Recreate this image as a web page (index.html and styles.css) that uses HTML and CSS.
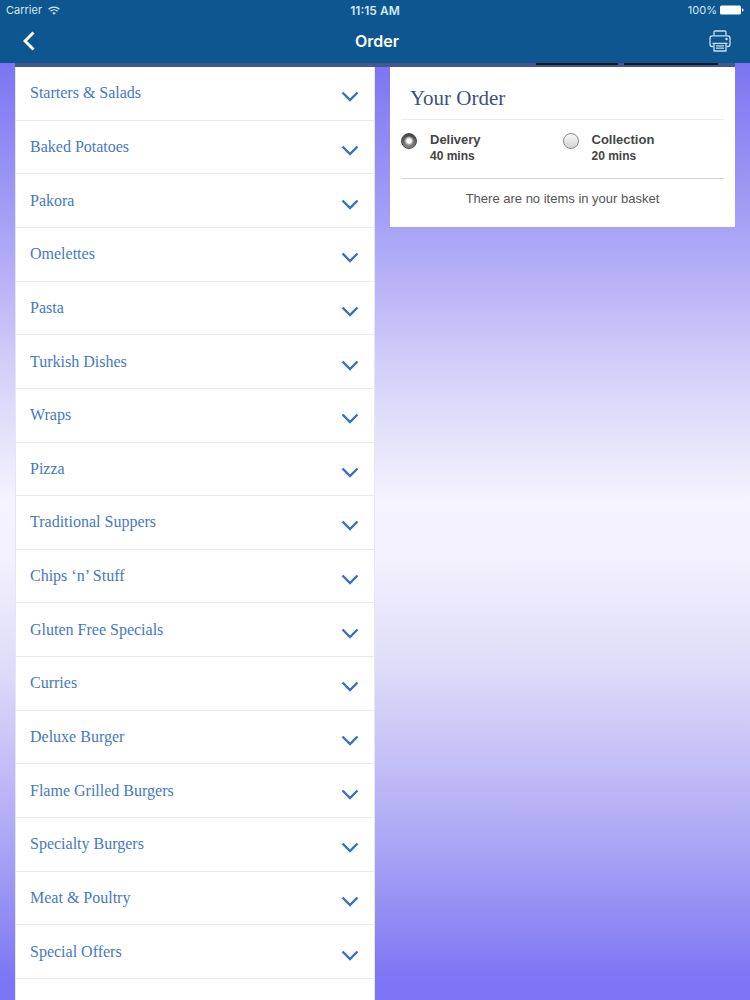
FILE: index.html
```html
<!DOCTYPE html>
<html lang="en">
  <head>
    <meta charset="UTF-8" />
    <meta name="viewport" content="width=device-width, initial-scale=1.0" />
    <title>Order</title>
    <link rel="stylesheet" href="styles.css">
  </head>
  <body>
    <header class="header">
      <div class="status">
        <div class="carrier">
          <span>Carrier</span>
          <svg width="12" height="9" viewBox="0 0 12 9" fill="none" stroke="currentColor" stroke-width="1.4">
            <path d="M0.6 3.3a7.7 7.7 0 0 1 10.8 0" />
            <path d="M2.5 5.3a5 5 0 0 1 7 0" />
            <path d="M6 8.8L4.2 7a2.6 2.6 0 0 1 3.6 0z" fill="currentColor" stroke="none" />
          </svg>
        </div>
        <span class="time">11:15 AM</span>
        <div class="battery">
          <span>100%</span>
          <svg width="24" height="10" viewBox="0 0 24 10" fill="#fff">
            <rect x="0" y="0.5" width="21" height="9" rx="1.5" />
            <path d="M22 3.2q1.6 0.6 1.6 1.8t-1.6 1.8z" />
          </svg>
        </div>
      </div>
      <nav class="navbar">
        <button class="back" aria-label="Back">
          <svg width="12" height="20" viewBox="0 0 12 20" fill="none" stroke="currentColor" stroke-width="3">
            <path d="M10.5 1.5L2 10l8.5 8.5" />
          </svg>
        </button>
        <h1>Order</h1>
        <button class="print" aria-label="Print">
          <svg width="22" height="22" viewBox="0 0 22 22" fill="none" stroke="currentColor" stroke-width="1.3">
            <path d="M5 5.5V2.2q0-1.2 1.2-1.2h9.6q1.2 0 1.2 1.2v3.3" />
            <path d="M4.5 16.5H3.2Q1 16.5 1 14.3V8.2Q1 5.8 3.4 5.8h15.2Q21 5.8 21 8.2v6.1q0 2.2-2.2 2.2h-1.3" />
            <path d="M3.5 13.4h15" />
            <path d="M5 13.4v7.6h12v-7.6M7 15.8h8M7 18.2h8" />
            <circle cx="17.5" cy="9" r="0.6" />
          </svg>
        </button>
      </nav>
    </header>

    <div class="tabs">
      <span class="tab"></span>
      <span class="tab tab-wide"></span>
    </div>

    <main class="container">
      <section class="menu">
        <ul id="menuList"></ul>
      </section>

      <form class="basket">
        <h2>Your Order</h2>
        <div class="options">
          <label class="option">
            <input type="radio" name="method" checked />
            <span>Delivery<small>40 mins</small></span>
          </label>
          <label class="option">
            <input type="radio" name="method" />
            <span>Collection<small>20 mins</small></span>
          </label>
        </div>
        <p>There are no items in your basket</p>
      </form>
    </main>

    <script>
      const categories = [
        "Starters & Salads",
        "Baked Potatoes",
        "Pakora",
        "Omelettes",
        "Pasta",
        "Turkish Dishes",
        "Wraps",
        "Pizza",
        "Traditional Suppers",
        "Chips ‘n’ Stuff",
        "Gluten Free Specials",
        "Curries",
        "Deluxe Burger",
        "Flame Grilled Burgers",
        "Specialty Burgers",
        "Meat & Poultry",
        "Special Offers",
      ];

      const menuList = document.getElementById("menuList");
      categories.forEach((category) => {
        const item = document.createElement("li");
        item.innerHTML = `
          <button class="category">
            <span></span>
            <svg width="18" height="12" viewBox="0 0 18 12" fill="none" stroke="currentColor" stroke-width="2.4">
              <path d="M1.5 1.5L9 9l7.5-7.5" />
            </svg>
          </button>`;
        item.querySelector("span").textContent = category;
        menuList.appendChild(item);
      });
    </script>
  </body>
</html>
```
FILE: styles.css
```css
* {
  box-sizing: border-box;
}
body {
  margin: 0;
  min-height: 100vh;
  font-family: "Liberation Sans", Arial, sans-serif;
  background: linear-gradient(#7c73f3 6%, #aea9f6 25%, #d6d3f9 38%, #f5f3fd 50%, #f3f1fd 56%, #dedbf9 67%, #a9a4f5 85%, #7d75f3 98%);
}
button {
  border: none;
  padding: 0;
  background: none;
  color: inherit;
  font: inherit;
  cursor: pointer;
}
svg {
  display: block;
}
.header {
  height: 63px;
  background: #0d568f;
  color: #fff;
  font-family: Inter, sans-serif;
}
.status {
  display: grid;
  grid-template-columns: 1fr auto 1fr;
  align-items: center;
  height: 20px;
  padding: 0 6px;
  font-size: 11px;
  color: #d5e8f7;
}
.carrier,
.battery {
  display: flex;
  align-items: center;
  gap: 6px;
}
.battery {
  justify-content: flex-end;
  gap: 3px;
}
.time {
  font-size: 12px;
  font-weight: 600;
}
.navbar {
  display: grid;
  grid-template-columns: 1fr auto 1fr;
  align-items: center;
  height: 42px;
  padding: 0 19px 0 23px;
}
.navbar h1 {
  margin: 0;
  font-size: 16px;
  font-weight: 600;
}
.back {
  justify-self: start;
}
.print {
  justify-self: end;
  color: #c5def2;
}
.tabs {
  display: flex;
  justify-content: flex-end;
  gap: 6px;
  height: 4px;
  margin: 0 15px;
  padding-right: 17px;
  background: #455690;
}
.tab {
  width: 82px;
  height: 2px;
  background: #061526;
}
.tab-wide {
  width: 94px;
}
.container {
  display: grid;
  grid-template-columns: 24fr 23fr;
  gap: 15px;
  align-items: start;
  padding: 0 15px;
}
.menu {
  padding-bottom: 21px;
  background: #fff;
  border: 1px solid #e6e4f6;
  border-width: 0 1px;
}
.menu ul {
  display: grid;
  grid-auto-rows: 1fr;
  min-height: calc(100vh - 88px);
  margin: 0;
  padding: 0;
  list-style: none;
}
.menu li {
  display: flex;
  border-bottom: 1px solid #e9e9f0;
}
.category {
  display: flex;
  justify-content: space-between;
  align-items: center;
  width: 100%;
  padding: 0 15px 0 14px;
  font-family: Georgia, "Liberation Serif", serif;
  font-size: 16px;
  color: #4479c4;
}
.category svg {
  margin-top: 8px;
  color: #3a70bd;
}
.basket {
  padding: 0 11px;
  background: #fff;
  color: #444;
}
.basket h2 {
  margin: 0;
  padding: 10px 9px 0;
  border-bottom: 1px solid #ececf0;
  font-family: Georgia, "Liberation Serif", serif;
  font-size: 21px;
  font-weight: normal;
  line-height: 42px;
  color: #3d5080;
}
.options {
  display: grid;
  grid-template-columns: 1fr 1fr;
  height: 59px;
  padding-top: 11px;
  border-bottom: 1px solid #d4d4d8;
}
.option {
  display: flex;
  align-items: flex-start;
  gap: 13px;
  font-size: 13px;
  font-weight: bold;
  line-height: 17px;
}
.option small {
  display: block;
  font-size: 12px;
}
.option input {
  appearance: none;
  width: 16px;
  height: 16px;
  margin: 2px 0 0;
  border: 1px solid #8a8a8a;
  border-radius: 50%;
  background: linear-gradient(#fafafa, #d2d2d2);
}
.option input:checked {
  border-color: #4a4a4a;
  background: radial-gradient(#fff 2px, #999 4px, transparent 5px), linear-gradient(#444, #858585);
}
.basket p {
  margin: 0;
  padding: 12px 0 20px;
  font-size: 13px;
  line-height: 16px;
  text-align: center;
  color: #555;
}
```
